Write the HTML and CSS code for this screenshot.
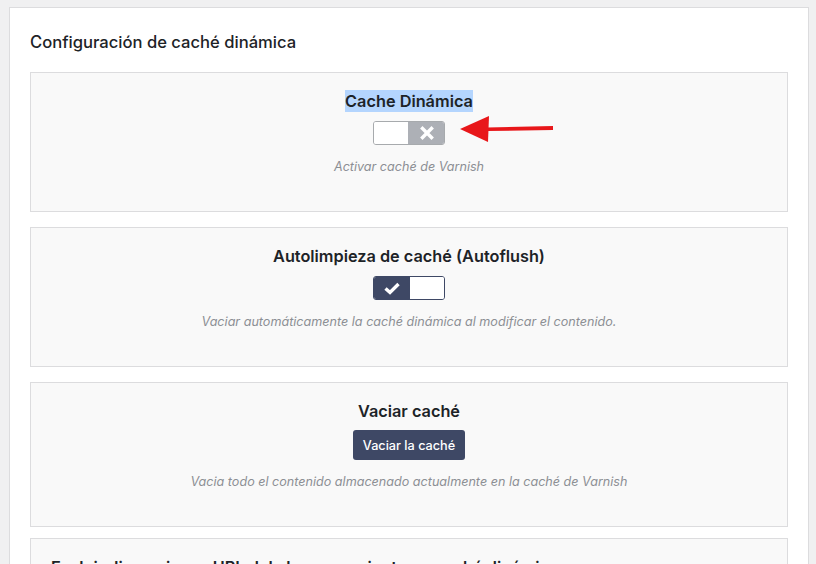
FILE: index.html
```html
<!DOCTYPE html>
<html lang="es">
<head>
<meta charset="utf-8">
<title>Configuración de caché dinámica</title>
<link rel="stylesheet" href="styles.css">
</head>
<body>
<div class="panel">
  <h2 class="panel-title">Configuración de caché dinámica</h2>

  <section class="card">
    <h3 class="card-title"><span class="selected">Cache Dinámica</span></h3>
    <div class="toggle toggle-off">
      <span class="toggle-blank"></span>
      <span class="toggle-knob">
        <svg width="14" height="14" viewBox="0 0 14 14"><path d="M2.5 2.5 L11.5 11.5 M11.5 2.5 L2.5 11.5" stroke="#fff" stroke-width="3.4" stroke-linecap="square"/></svg>
      </span>
    </div>
    <p class="card-desc">Activar caché de Varnish</p>
    <svg class="arrow" width="100" height="32" viewBox="0 0 100 32"><path d="M28 14.5 L94 13 L94 17 L28 18 Z" fill="#e8171a"/><path d="M1 16 L30 3 L29 29 Z" fill="#e8171a"/></svg>
  </section>

  <section class="card">
    <h3 class="card-title">Autolimpieza de caché (Autoflush)</h3>
    <div class="toggle toggle-on">
      <span class="toggle-knob">
        <svg width="18" height="14" viewBox="0 0 18 14"><path d="M2.5 7.5 L7 11.5 L15.5 3" fill="none" stroke="#fff" stroke-width="3.4"/></svg>
      </span>
      <span class="toggle-blank"></span>
    </div>
    <p class="card-desc">Vaciar automáticamente la caché dinámica al modificar el contenido.</p>
  </section>

  <section class="card card-last">
    <h3 class="card-title">Vaciar caché</h3>
    <button class="btn">Vaciar la caché</button>
    <p class="card-desc">Vacia todo el contenido almacenado actualmente en la caché de Varnish</p>
  </section>

  <section class="card card-left">
    <h3 class="card-title">Excluir dimensiones URL del almacenamiento en caché dinámica</h3>
  </section>
</div>
</body>
</html>
```

FILE: styles.css
```css
* { box-sizing: border-box; }
html, body { margin: 0; padding: 0; }
body {
  background: #f0f0f1;
  font-family: Inter, "Open Sans", "Liberation Sans", sans-serif;
  color: #1d2327;
  height: 564px;
  overflow: hidden;
}
.panel {
  margin: 7px 7px 0 9px;
  background: #fff;
  border: 1px solid #dcdcde;
  padding: 23px 20px 20px 20px;
}
.panel-title {
  margin: 0 0 19px 0;
  font-size: 16.6px;
  font-weight: 500;
  line-height: 22px;
}
.card {
  position: relative;
  background: #f9f9f9;
  border: 1px solid #dcdcde;
  padding: 17px 20px 35px;
  display: flex;
  flex-direction: column;
  align-items: center;
  margin-bottom: 15px;
}
.card-last { margin-bottom: 11px; }
.card-title {
  margin: 0;
  font-size: 16.3px;
  font-weight: 600;
  line-height: 22px;
}
.selected { background: #b4d5fe; padding: 1px 0; }
.toggle {
  margin-top: 9px;
  width: 72px;
  height: 24px;
  display: flex;
  border-radius: 3px;
  overflow: hidden;
}
.toggle-off { border: 1px solid #a7aaad; }
.toggle-on { border: 1px solid #3e4865; }
.toggle-blank { flex: 1; background: #fff; }
.toggle-knob {
  display: flex;
  align-items: center;
  justify-content: center;
}
.toggle-off .toggle-knob { background: #adb0b6; margin: -1px -1px -1px 0; width: 37px; }
.toggle-on .toggle-knob { background: #3e4865; margin: -1px 0 -1px -1px; width: 37px; }
.card-desc {
  margin: 13px 0 0;
  font-size: 12.6px;
  font-style: italic;
  line-height: 18px;
  color: #8c8f94;
}
.btn {
  margin-top: 8px;
  height: 30px;
  padding: 0 10px;
  border: 0;
  border-radius: 3px;
  background: #3e4865;
  color: #fff;
  font-family: inherit;
  font-size: 12.7px;
  font-weight: 500;
}
.card-left { align-items: flex-start; }
.arrow {
  position: absolute;
  left: 428px;
  top: 40px;
}
```
